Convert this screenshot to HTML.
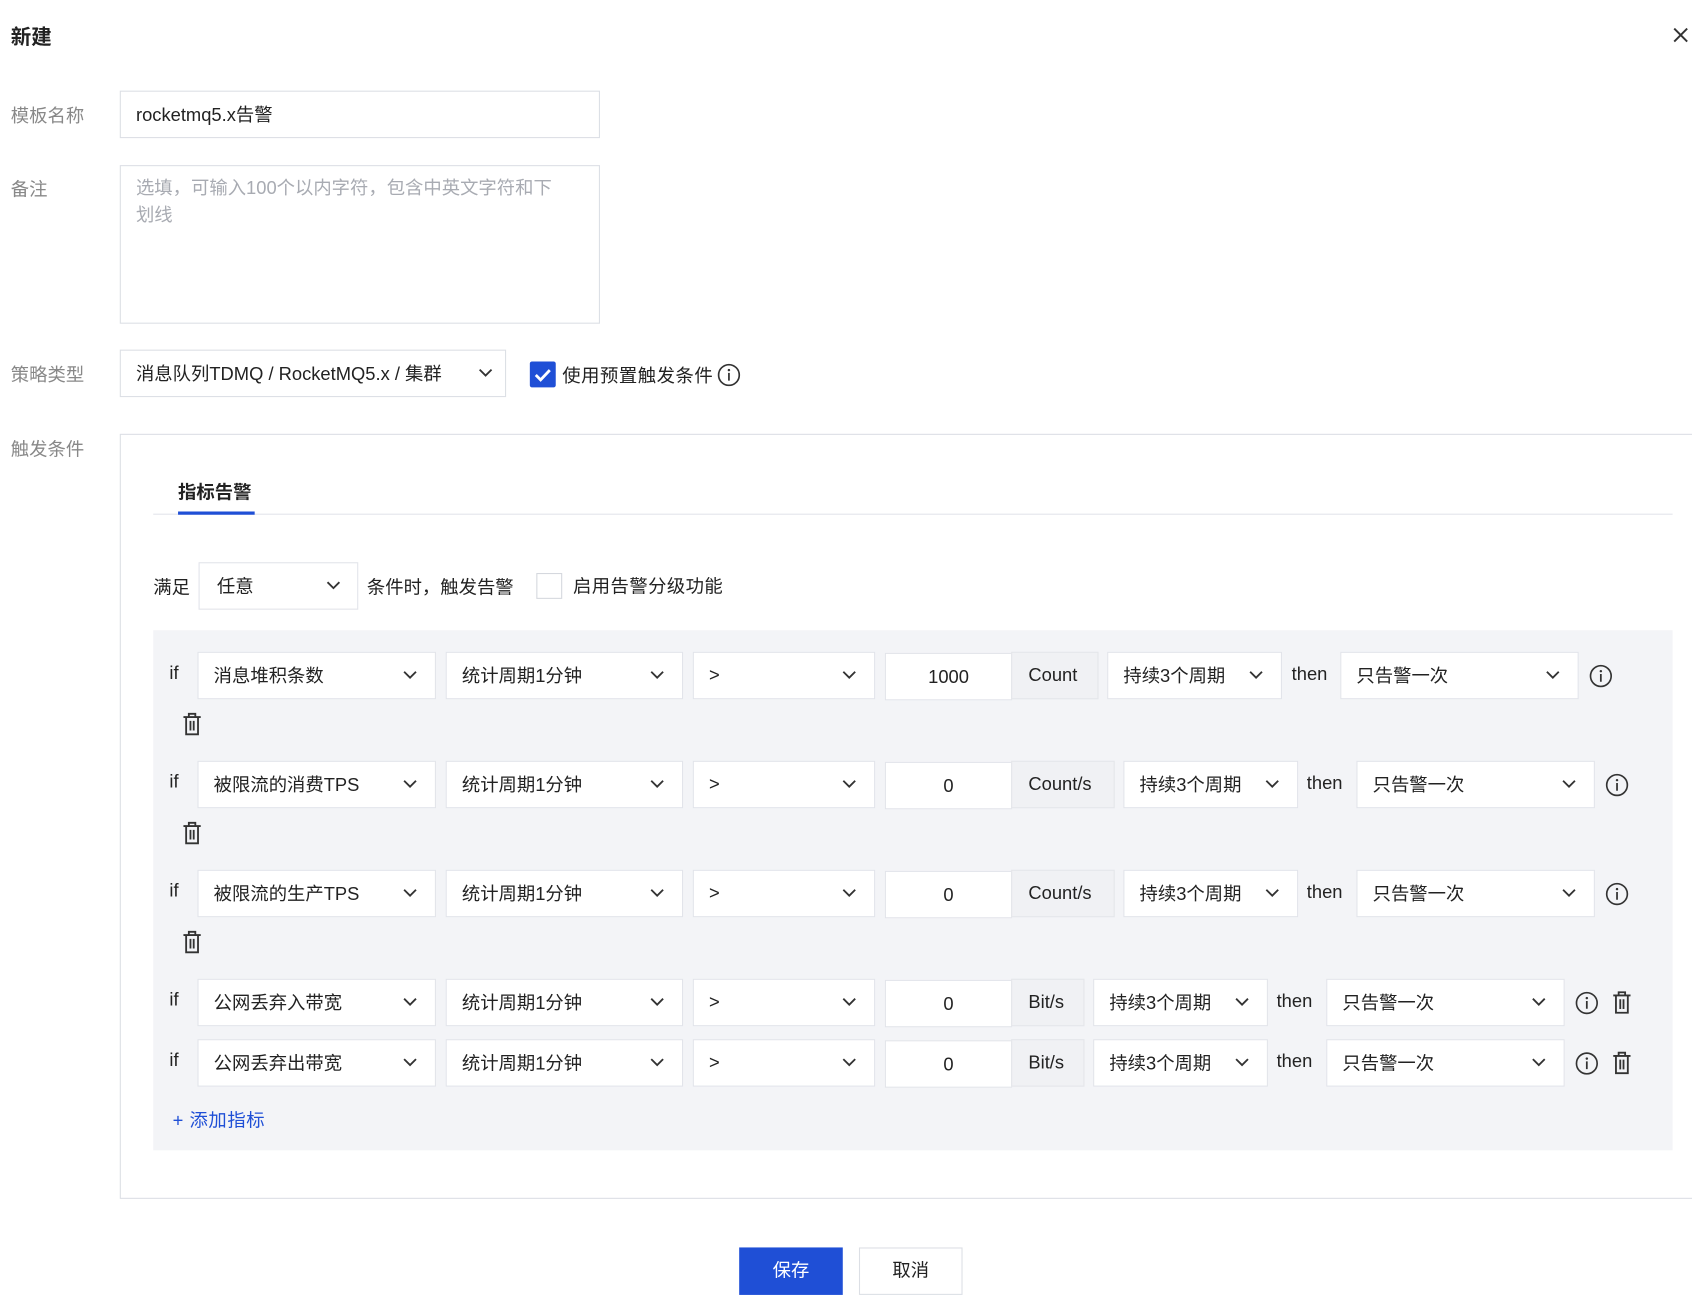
<!DOCTYPE html>
<html><head><meta charset="utf-8"><style>
html,body{margin:0;padding:0;background:#fff;width:1692px;height:1308px;overflow:hidden}
#w{position:absolute;left:0;top:0;width:1568px;height:1212px;transform:scale(1.0791);transform-origin:0 0;font-family:"Liberation Sans","Noto Sans CJK SC",sans-serif;color:#222;font-size:17px}
.a{position:absolute;white-space:nowrap}
.lb{color:#888;font-size:17px}
.b{position:absolute;box-sizing:border-box;background:#fff;border:1px solid #e2e4ea;height:44px;line-height:42px;padding-left:14px;white-space:nowrap}
.ch{position:absolute;top:16px;width:14px;height:9px}
.u{position:absolute;box-sizing:border-box;background:#f0f1f4;border:1px solid #e4e6ea;height:44px;line-height:42px;padding-left:15px;color:#222}
.n{position:absolute;box-sizing:border-box;background:#fff;border:1px solid #e2e4ea;height:44px;line-height:44px;text-align:center}
</style></head><body><div id="w">
<svg width="0" height="0" style="position:absolute"><defs>
<symbol id="chev" viewBox="0 0 14 9"><path d="M1.5 1.5 L7 7 L12.5 1.5" fill="none" stroke="#333" stroke-width="1.7"/></symbol>
<symbol id="info" viewBox="0 0 24 24"><circle cx="12" cy="12" r="10" fill="none" stroke="#333" stroke-width="1.6"/><circle cx="12" cy="7.3" r="1.2" fill="#333"/><path d="M12 10v7.5" stroke="#333" stroke-width="1.7"/></symbol>
<symbol id="trash" viewBox="0 0 20 24"><path d="M2 5.5h16M7 5.5V2.5h6v3M4.5 5.5v16h11v-16M8.5 9v9M11.5 9v9" fill="none" stroke="#333" stroke-width="1.7"/></symbol>
</defs></svg>

<div class="a" style="left:10px;top:20px;font-size:19px;font-weight:bold">新建</div>
<svg class="a" style="left:1550px;top:25px" width="15" height="15" viewBox="0 0 15 15"><path d="M1.5 1.5L13.5 13.5M13.5 1.5L1.5 13.5" stroke="#333" stroke-width="1.8"/></svg>

<div class="a lb" style="left:10px;top:93px">模板名称</div>
<div class="b" style="left:111px;top:84px;width:445px;border-color:#dcdfe5;line-height:44px">rocketmq5.x告警</div>

<div class="a lb" style="left:10px;top:161px">备注</div>
<div class="a" style="left:111px;top:153px;width:445px;height:147px;box-sizing:border-box;border:1px solid #dcdfe5;padding:8px 30px 8px 14px;color:#a8abb2;line-height:25px;white-space:normal">选填，可输入100个以内字符，包含中英文字符和下划线</div>

<div class="a lb" style="left:10px;top:333px">策略类型</div>
<div class="b" style="left:111px;top:324px;width:358px;border-color:#dcdfe5;line-height:44px">消息队列TDMQ / RocketMQ5.x / 集群<svg class="ch" style="left:331px"><use href="#chev"/></svg></div>
<div class="a" style="left:491px;top:335px;width:24px;height:24px;background:#1f4fd6;border-radius:2px"><svg width="24" height="24"><path d="M5.5 12.5l4.5 4.5 8.5-9" fill="none" stroke="#fff" stroke-width="2.6"/></svg></div>
<div class="a" style="left:521px;top:334px;letter-spacing:0.5px">使用预置触发条件</div>
<svg class="a" style="left:664px;top:336px" width="23" height="23"><use href="#info"/></svg>

<div class="a lb" style="left:10px;top:402px">触发条件</div>
<div class="a" style="left:111px;top:402px;width:1470px;height:709px;box-sizing:border-box;border:1px solid #dcdfe5"></div>

<div class="a" style="left:165px;top:442px;font-weight:bold">指标告警</div>
<div class="a" style="left:142px;top:476px;width:1408px;height:1px;background:#e2e4ea"></div>
<div class="a" style="left:165px;top:474px;width:71px;height:3px;background:#1f4fd6"></div>

<div class="a" style="left:142px;top:530px">满足</div>
<div class="b" style="left:184px;top:521px;width:148px;padding-left:16px;line-height:44px">任意<svg class="ch" style="left:117px"><use href="#chev"/></svg></div>
<div class="a" style="left:340px;top:530px">条件时，触发告警</div>
<div class="a" style="left:497px;top:531px;width:24px;height:24px;box-sizing:border-box;border:1px solid #d5d8de;background:#fff"></div>
<div class="a" style="left:531px;top:529px;letter-spacing:0.4px">启用告警分级功能</div>

<div class="a" style="left:142px;top:584px;width:1408px;height:482px;background:#f3f4f7"></div>

<!-- Row 1 -->
<div class="a" style="left:157px;top:614px">if</div>
<div class="b" style="left:183px;top:604px;width:221px;line-height:44px">消息堆积条数<svg class="ch" style="left:189px"><use href="#chev"/></svg></div>
<div class="b" style="left:413px;top:604px;width:220px;line-height:44px">统计周期1分钟<svg class="ch" style="left:188px"><use href="#chev"/></svg></div>
<div class="b" style="left:642px;top:604px;width:169px">&gt;<svg class="ch" style="left:137px"><use href="#chev"/></svg></div>
<div class="n" style="left:820px;top:605px;width:118px">1000</div>
<div class="u" style="left:937px;top:604px;width:81px">Count</div>
<div class="b" style="left:1026px;top:604px;width:162px;line-height:44px">持续3个周期<svg class="ch" style="left:130px"><use href="#chev"/></svg></div>
<div class="a" style="left:1197px;top:615px">then</div>
<div class="b" style="left:1242px;top:604px;width:221px;line-height:44px">只告警一次<svg class="ch" style="left:189px"><use href="#chev"/></svg></div>
<svg class="a" style="left:1472px;top:615px" width="23" height="23"><use href="#info"/></svg>
<svg class="a" style="left:168px;top:659px" width="20" height="24"><use href="#trash"/></svg>

<!-- Row 2 -->
<div class="a" style="left:157px;top:715px">if</div>
<div class="b" style="left:183px;top:705px;width:221px;line-height:44px">被限流的消费TPS<svg class="ch" style="left:189px"><use href="#chev"/></svg></div>
<div class="b" style="left:413px;top:705px;width:220px;line-height:44px">统计周期1分钟<svg class="ch" style="left:188px"><use href="#chev"/></svg></div>
<div class="b" style="left:642px;top:705px;width:169px">&gt;<svg class="ch" style="left:137px"><use href="#chev"/></svg></div>
<div class="n" style="left:820px;top:706px;width:118px">0</div>
<div class="u" style="left:937px;top:705px;width:96px">Count/s</div>
<div class="b" style="left:1041px;top:705px;width:162px;line-height:44px">持续3个周期<svg class="ch" style="left:130px"><use href="#chev"/></svg></div>
<div class="a" style="left:1211px;top:716px">then</div>
<div class="b" style="left:1257px;top:705px;width:221px;line-height:44px">只告警一次<svg class="ch" style="left:189px"><use href="#chev"/></svg></div>
<svg class="a" style="left:1487px;top:716px" width="23" height="23"><use href="#info"/></svg>
<svg class="a" style="left:168px;top:760px" width="20" height="24"><use href="#trash"/></svg>

<!-- Row 3 -->
<div class="a" style="left:157px;top:816px">if</div>
<div class="b" style="left:183px;top:806px;width:221px;line-height:44px">被限流的生产TPS<svg class="ch" style="left:189px"><use href="#chev"/></svg></div>
<div class="b" style="left:413px;top:806px;width:220px;line-height:44px">统计周期1分钟<svg class="ch" style="left:188px"><use href="#chev"/></svg></div>
<div class="b" style="left:642px;top:806px;width:169px">&gt;<svg class="ch" style="left:137px"><use href="#chev"/></svg></div>
<div class="n" style="left:820px;top:807px;width:118px">0</div>
<div class="u" style="left:937px;top:806px;width:96px">Count/s</div>
<div class="b" style="left:1041px;top:806px;width:162px;line-height:44px">持续3个周期<svg class="ch" style="left:130px"><use href="#chev"/></svg></div>
<div class="a" style="left:1211px;top:817px">then</div>
<div class="b" style="left:1257px;top:806px;width:221px;line-height:44px">只告警一次<svg class="ch" style="left:189px"><use href="#chev"/></svg></div>
<svg class="a" style="left:1487px;top:817px" width="23" height="23"><use href="#info"/></svg>
<svg class="a" style="left:168px;top:861px" width="20" height="24"><use href="#trash"/></svg>

<!-- Row 4 -->
<div class="a" style="left:157px;top:917px">if</div>
<div class="b" style="left:183px;top:907px;width:221px;line-height:44px">公网丢弃入带宽<svg class="ch" style="left:189px"><use href="#chev"/></svg></div>
<div class="b" style="left:413px;top:907px;width:220px;line-height:44px">统计周期1分钟<svg class="ch" style="left:188px"><use href="#chev"/></svg></div>
<div class="b" style="left:642px;top:907px;width:169px">&gt;<svg class="ch" style="left:137px"><use href="#chev"/></svg></div>
<div class="n" style="left:820px;top:908px;width:118px">0</div>
<div class="u" style="left:937px;top:907px;width:68px">Bit/s</div>
<div class="b" style="left:1013px;top:907px;width:162px;line-height:44px">持续3个周期<svg class="ch" style="left:130px"><use href="#chev"/></svg></div>
<div class="a" style="left:1183px;top:918px">then</div>
<div class="b" style="left:1229px;top:907px;width:221px;line-height:44px">只告警一次<svg class="ch" style="left:189px"><use href="#chev"/></svg></div>
<svg class="a" style="left:1459px;top:918px" width="23" height="23"><use href="#info"/></svg>
<svg class="a" style="left:1493px;top:917px" width="20" height="24"><use href="#trash"/></svg>

<!-- Row 5 -->
<div class="a" style="left:157px;top:973px">if</div>
<div class="b" style="left:183px;top:963px;width:221px;line-height:44px">公网丢弃出带宽<svg class="ch" style="left:189px"><use href="#chev"/></svg></div>
<div class="b" style="left:413px;top:963px;width:220px;line-height:44px">统计周期1分钟<svg class="ch" style="left:188px"><use href="#chev"/></svg></div>
<div class="b" style="left:642px;top:963px;width:169px">&gt;<svg class="ch" style="left:137px"><use href="#chev"/></svg></div>
<div class="n" style="left:820px;top:964px;width:118px">0</div>
<div class="u" style="left:937px;top:963px;width:68px">Bit/s</div>
<div class="b" style="left:1013px;top:963px;width:162px;line-height:44px">持续3个周期<svg class="ch" style="left:130px"><use href="#chev"/></svg></div>
<div class="a" style="left:1183px;top:974px">then</div>
<div class="b" style="left:1229px;top:963px;width:221px;line-height:44px">只告警一次<svg class="ch" style="left:189px"><use href="#chev"/></svg></div>
<svg class="a" style="left:1459px;top:974px" width="23" height="23"><use href="#info"/></svg>
<svg class="a" style="left:1493px;top:973px" width="20" height="24"><use href="#trash"/></svg>

<div class="a" style="left:160px;top:1024px;color:#1f4fd6;letter-spacing:0.5px">+ 添加指标</div>

<div class="a" style="left:685px;top:1156px;width:96px;height:44px;background:#1f4fd6;color:#fff;text-align:center;line-height:44px">保存</div>
<div class="a" style="left:796px;top:1156px;width:96px;height:44px;box-sizing:border-box;border:1px solid #dcdfe5;background:#fff;text-align:center;line-height:42px">取消</div>
</div></body></html>
